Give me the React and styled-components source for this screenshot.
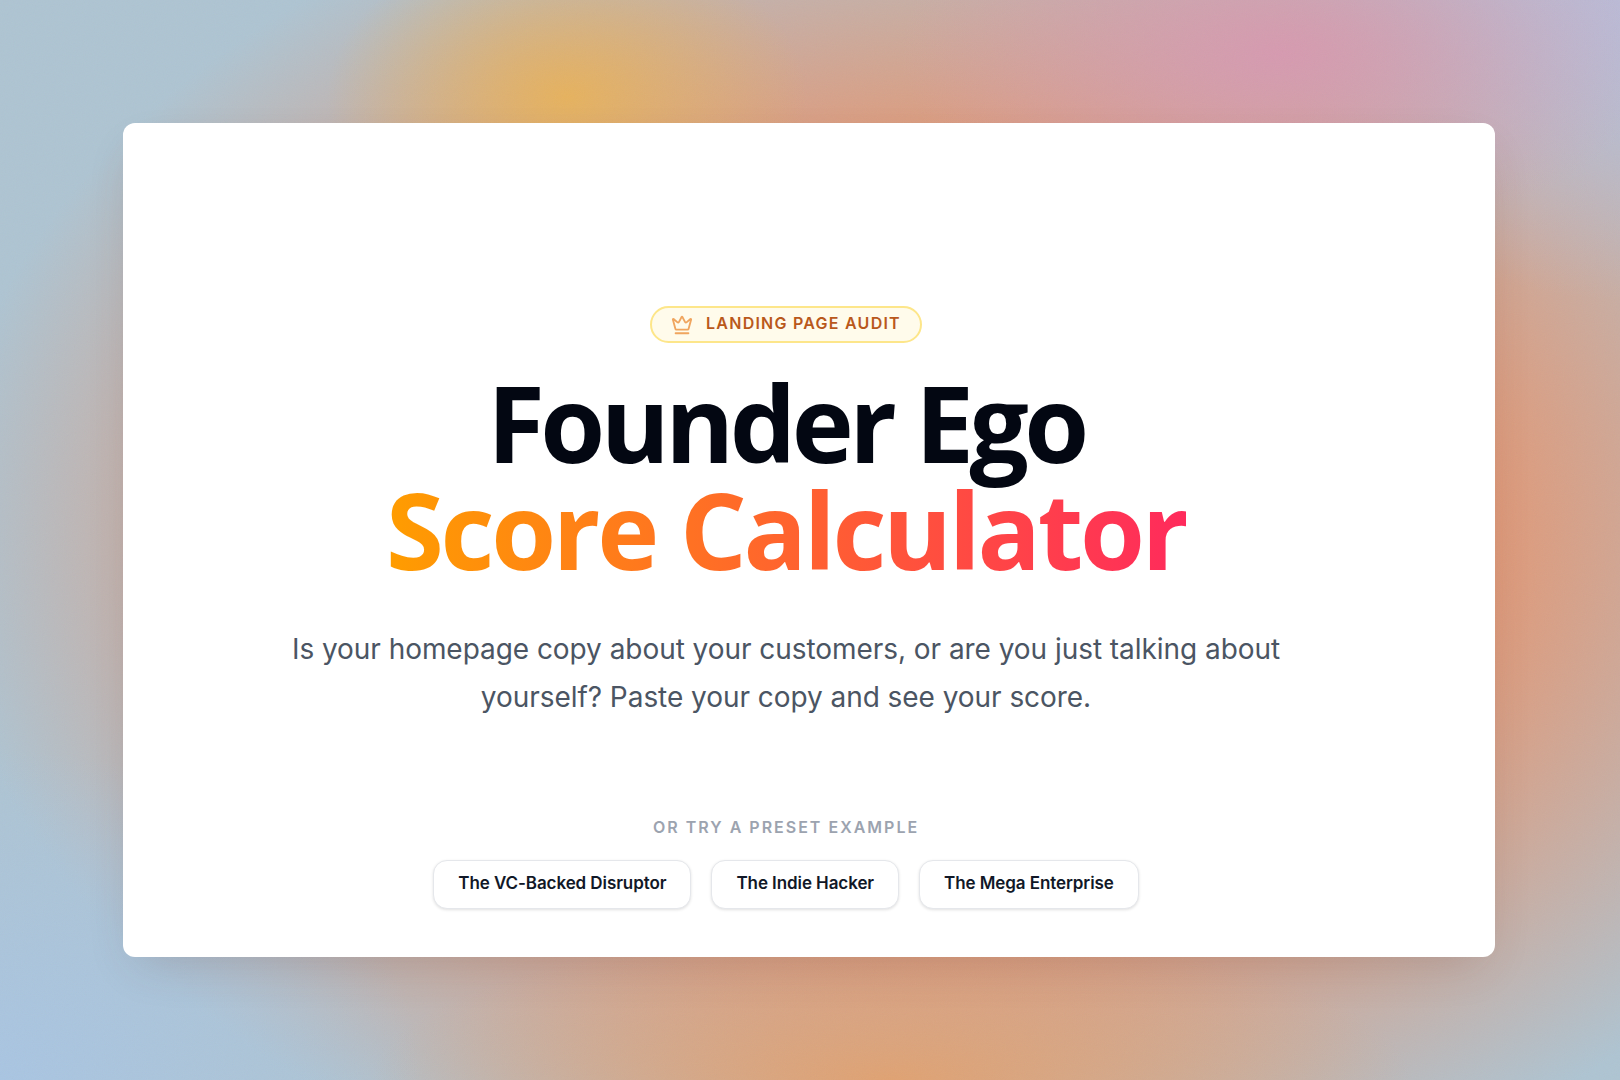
import styled, { createGlobalStyle } from "styled-components"
import { Crown } from "lucide-react"

const GlobalStyle = createGlobalStyle`
  html, body {
    margin: 0;
    padding: 0;
  }
  body {
    font-family: Inter, "Liberation Sans", sans-serif;
  }
`

const Page = styled.div`
  position: relative;
  width: 1620px;
  height: 1080px;
  box-sizing: border-box;
  padding: 123px 125px 123px 123px;
  overflow: hidden;
  background-color: #aec4d2;
  background-image:
    radial-gradient(ellipse 240px 160px at 35% 9%, #e6b25e 0%, rgba(230, 178, 94, 0) 100%),
    radial-gradient(ellipse 380px 190px at 79% 5%, #d69ab0 0%, rgba(214, 154, 176, 0) 100%),
    radial-gradient(ellipse 340px 300px at 100% 0%, #b9bcd8 0%, rgba(185, 188, 216, 0) 100%),
    radial-gradient(ellipse 420px 330px at 0% 100%, #a9c5e2 0%, rgba(169, 197, 226, 0) 100%),
    radial-gradient(ellipse 520px 150px at 55% 100%, #e0a272 0%, rgba(224, 162, 114, 0) 100%),
    radial-gradient(ellipse 1000px 700px at 58% 50%, #df9a7a 0%, #df9a7a 56%, #aec4d2 100%);
`

const Grain = styled.svg`
  position: absolute;
  inset: 0;
  width: 100%;
  height: 100%;
  opacity: 0.05;
  pointer-events: none;
`

const Card = styled.main`
  position: relative;
  height: 834px;
  box-sizing: border-box;
  padding: 183px 46px 0 0;
  background: #fff;
  border-radius: 12px;
  box-shadow: 0 18px 45px -14px rgba(80, 50, 50, 0.2);
  display: flex;
  flex-direction: column;
  align-items: center;
`

const Badge = styled.div`
  display: flex;
  align-items: center;
  gap: 13px;
  height: 37px;
  box-sizing: border-box;
  padding: 0 19px 4px 19px;
  border: 2px solid #fde68a;
  border-radius: 999px;
  background: #fffbeb;
  color: #b9581b;
  font-size: 16px;
  font-weight: 600;
  letter-spacing: 1.25px;
  svg {
    position: relative;
    top: 2px;
    color: #f0a55e;
    flex-shrink: 0;
  }
`

const Title = styled.h1`
  margin: 26px 0 0;
  font-family: "Open Sans", "Liberation Sans", sans-serif;
  font-size: 105px;
  line-height: 107px;
  font-weight: 700;
  letter-spacing: -4.5px;
  text-align: center;
  color: #030712;
`

const Accent = styled.span`
  display: block;
  letter-spacing: -3.3px;
  background: linear-gradient(90deg, #ff9d00 0%, #ff2a5c 100%);
  -webkit-background-clip: text;
  background-clip: text;
  color: transparent;
`

const Lead = styled.p`
  margin: 43px 0 0;
  width: 1040px;
  font-size: 28px;
  line-height: 47.6px;
  letter-spacing: -0.05px;
  text-align: center;
  color: #4b5563;
`

const PresetLabel = styled.div`
  margin-top: 96px;
  font-size: 16px;
  font-weight: 600;
  letter-spacing: 2px;
  color: #9ca3af;
`

const PresetRow = styled.div`
  margin-top: 23px;
  display: flex;
  gap: 20px;
`

const PresetButton = styled.button`
  height: 49px;
  padding: 0 24px 3px;
  border: 1px solid #e5e7eb;
  border-radius: 14px;
  background: #fff;
  box-shadow: 0 1px 3px rgba(0, 0, 0, 0.12);
  font-family: inherit;
  font-size: 17px;
  font-weight: 600;
  letter-spacing: -0.08px;
  color: #111827;
`

const presets = ["The VC-Backed Disruptor", "The Indie Hacker", "The Mega Enterprise"]

export default function App() {
  return (
    <>
      <GlobalStyle />
      <Page>
        <Grain aria-hidden="true">
          <filter id="grain">
            <feTurbulence type="fractalNoise" baseFrequency="0.9" numOctaves="2" />
          </filter>
          <rect width="100%" height="100%" filter="url(#grain)" />
        </Grain>
        <Card>
          <Badge>
            <Crown size={22} strokeWidth={2} />
            LANDING PAGE AUDIT
          </Badge>
          <Title>
            Founder Ego
            <Accent>Score Calculator</Accent>
          </Title>
          <Lead>
            Is your homepage copy about your customers, or are you just talking about
            yourself? Paste your copy and see your score.
          </Lead>
          <PresetLabel>OR TRY A PRESET EXAMPLE</PresetLabel>
          <PresetRow>
            {presets.map((name) => (
              <PresetButton key={name}>{name}</PresetButton>
            ))}
          </PresetRow>
        </Card>
      </Page>
    </>
  )
}
